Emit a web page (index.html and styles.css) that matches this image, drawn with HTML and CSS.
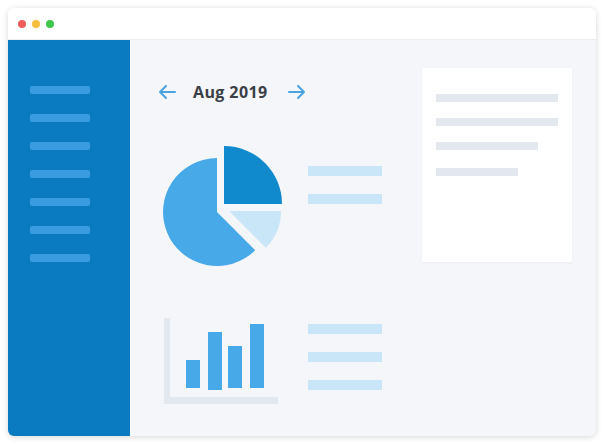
FILE: index.html
```html
<!DOCTYPE html>
<html lang="en">
<head>
    <meta charset="UTF-8">
    <meta name="viewport" content="width=device-width, initial-scale=1.0">
    <title>Dashboard</title>
    <link rel="stylesheet" href="styles.css">
</head>
<body>
    <div class="window">
        <div class="titlebar">
            <span class="dot red"></span>
            <span class="dot yellow"></span>
            <span class="dot green"></span>
        </div>
        <div class="content">
            <div class="sidebar">
                <div class="side-line"></div>
                <div class="side-line"></div>
                <div class="side-line"></div>
                <div class="side-line"></div>
                <div class="side-line"></div>
                <div class="side-line"></div>
                <div class="side-line"></div>
            </div>
            <div class="main">
                <div class="left">
                    <div class="month-nav">
                        <svg class="arrow" width="18" height="14" viewBox="0 0 18 14">
                            <path d="M17 7H2M8 1L2 7l6 6" fill="none" stroke="#4aa3df" stroke-width="2" stroke-linecap="round" stroke-linejoin="round"/>
                        </svg>
                        <span class="month">Aug 2019</span>
                        <svg class="arrow" width="18" height="14" viewBox="0 0 18 14">
                            <path d="M1 7h15M10 1l6 6-6 6" fill="none" stroke="#4aa3df" stroke-width="2" stroke-linecap="round" stroke-linejoin="round"/>
                        </svg>
                    </div>
                    <div class="chart-row pie-row">
                        <svg class="chart" width="128" height="128" viewBox="0 0 128 128">
                            <path d="M59 70V16A54 54 0 1 0 97.2 108.2Z" fill="#47a9e8"/>
                            <path d="M66 62V4A58 58 0 0 1 124 62Z" fill="#1189cd"/>
                            <path d="M71 69H123A52 52 0 0 1 107.8 105.8Z" fill="#c9e5f8"/>
                        </svg>
                        <div class="legend">
                            <div class="legend-line"></div>
                            <div class="legend-line"></div>
                        </div>
                    </div>
                    <div class="chart-row bar-row">
                        <svg class="chart" width="128" height="94" viewBox="0 0 128 94">
                            <rect x="6" y="4" width="6" height="86" fill="#e3e7ee"/>
                            <rect x="6" y="83" width="114" height="7" fill="#e3e7ee"/>
                            <rect x="28" y="46" width="14" height="28" fill="#47a9e8"/>
                            <rect x="50" y="18" width="14" height="58" fill="#47a9e8"/>
                            <rect x="70" y="32" width="14" height="42" fill="#47a9e8"/>
                            <rect x="92" y="10" width="14" height="64" fill="#47a9e8"/>
                        </svg>
                        <div class="legend">
                            <div class="legend-line"></div>
                            <div class="legend-line"></div>
                            <div class="legend-line"></div>
                        </div>
                    </div>
                </div>
                <div class="card">
                    <div class="card-line"></div>
                    <div class="card-line"></div>
                    <div class="card-line mid"></div>
                    <div class="card-line short"></div>
                </div>
            </div>
        </div>
    </div>
</body>
</html>
```

FILE: styles.css
```css
body {
    margin: 0;
    background-color: #ffffff;
    font-family: "Open Sans", Arial, sans-serif;
}

.window {
    margin: 8px;
    width: 588px;
    height: 428px;
    border-radius: 6px;
    overflow: hidden;
    background-color: #f4f6fa;
    box-shadow: 0 1px 6px rgba(0, 0, 0, 0.16);
    display: flex;
    flex-direction: column;
}

.titlebar {
    height: 31px;
    background-color: #ffffff;
    border-bottom: 1px solid #e9ecf0;
    display: flex;
    align-items: center;
    gap: 6px;
    padding-left: 10px;
}

.dot {
    width: 8px;
    height: 8px;
    border-radius: 50%;
}

.red { background-color: #f25b5b; }
.yellow { background-color: #f4bd3a; }
.green { background-color: #3ec64a; }

.content {
    flex: 1;
    display: flex;
}

.sidebar {
    width: 122px;
    background-color: #0b7bc1;
    padding: 46px 0 0 22px;
    box-sizing: border-box;
    display: flex;
    flex-direction: column;
    gap: 20px;
}

.side-line {
    width: 60px;
    height: 8px;
    border-radius: 2px;
    background-color: #3a9be0;
}

.main {
    flex: 1;
    display: flex;
}

.left {
    flex: 1;
    padding: 40px 0 0 28px;
}

.month-nav {
    height: 24px;
    display: flex;
    align-items: center;
}

.month {
    font-size: 16px;
    font-weight: 700;
    letter-spacing: 0.4px;
    color: #3b3f47;
    margin: 0 20px 0 17px;
}

.chart-row {
    display: flex;
    align-items: flex-start;
    gap: 22px;
}

.pie-row {
    margin-top: 38px;
}

.pie-row .legend {
    padding-top: 24px;
}

.bar-row {
    margin-top: 44px;
}

.bar-row .legend {
    padding-top: 10px;
}

.chart {
    display: block;
}

.legend {
    display: flex;
    flex-direction: column;
    gap: 18px;
}

.legend-line {
    width: 74px;
    height: 10px;
    background-color: #c9e5f8;
}

.card {
    width: 150px;
    height: 194px;
    margin: 28px 24px 0 0;
    padding: 26px 14px 0;
    box-sizing: border-box;
    background-color: #ffffff;
    box-shadow: 0 1px 3px rgba(0, 0, 0, 0.04);
    display: flex;
    flex-direction: column;
    gap: 16px;
}

.card-line {
    width: 122px;
    height: 8px;
    background-color: #e3e7ee;
}

.card-line.mid {
    width: 102px;
}

.card-line.short {
    width: 82px;
    margin-top: 2px;
}
```
